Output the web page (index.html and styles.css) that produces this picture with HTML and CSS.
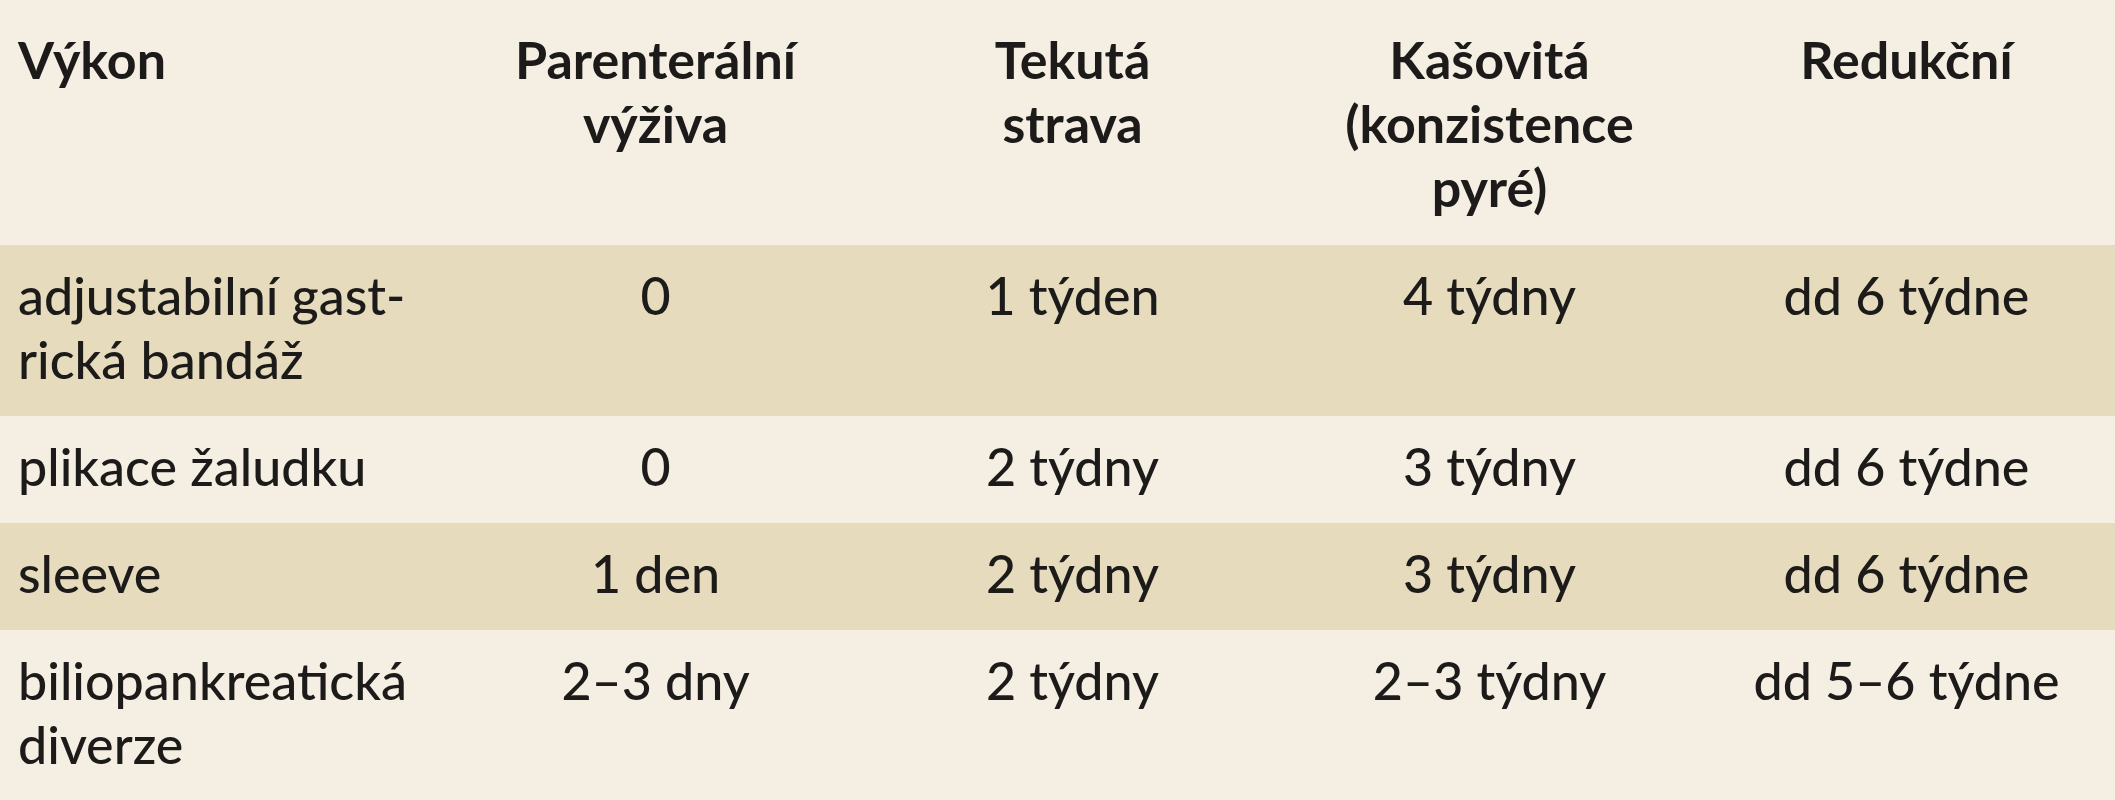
FILE: index.html
```html
<!DOCTYPE html>
<html lang="cs">
<head>
<meta charset="utf-8">
<title>Výkon – dieta</title>
<link rel="stylesheet" href="styles.css">
</head>
<body>
<table class="diet">
  <colgroup>
    <col class="col-first">
    <col class="col-data">
    <col class="col-data">
    <col class="col-data">
    <col class="col-data">
  </colgroup>
  <thead>
    <tr class="head">
      <th class="left">Výkon</th>
      <th>Parenterální<br>výživa</th>
      <th>Tekutá<br>strava</th>
      <th>Kašovitá<br>(konzistence<br>pyré)</th>
      <th>Redukční</th>
    </tr>
  </thead>
  <tbody>
    <tr class="shade">
      <td class="left">adjustabilní gast-<br>rická bandáž</td>
      <td>0</td>
      <td>1 týden</td>
      <td>4 týdny</td>
      <td>dd 6 týdne</td>
    </tr>
    <tr>
      <td class="left">plikace žaludku</td>
      <td>0</td>
      <td>2 týdny</td>
      <td>3 týdny</td>
      <td>dd 6 týdne</td>
    </tr>
    <tr class="shade">
      <td class="left">sleeve</td>
      <td>1 den</td>
      <td>2 týdny</td>
      <td>3 týdny</td>
      <td>dd 6 týdne</td>
    </tr>
    <tr>
      <td class="left">biliopankreatická<br>diverze</td>
      <td>2–3 dny</td>
      <td>2 týdny</td>
      <td>2–3 týdny</td>
      <td>dd 5–6 týdne</td>
    </tr>
  </tbody>
</table>
</body>
</html>
```

FILE: styles.css
```css
html, body {
  margin: 0;
  padding: 0;
  background: #f4efe2;
}

.diet {
  width: 2115px;
  table-layout: fixed;
  border-collapse: collapse;
  border-spacing: 0;
  font-family: Lato, "Open Sans", "Liberation Sans", sans-serif;
  font-size: 52px;
  font-weight: 500;
  line-height: 64px;
  color: #1c1b1a;
}

.col-first { width: 447px; }
.col-data { width: 417px; }

.diet th,
.diet td {
  padding: 18px 8px 25px;
  text-align: center;
  vertical-align: top;
  white-space: nowrap;
}

.diet th {
  font-weight: 700;
  padding-top: 27px;
  padding-bottom: 26px;
}

.diet .left {
  text-align: left;
  padding-left: 18px;
}

.head {
  background: #f4efe2;
}

.shade {
  background: #e6dcbd;
}
```
